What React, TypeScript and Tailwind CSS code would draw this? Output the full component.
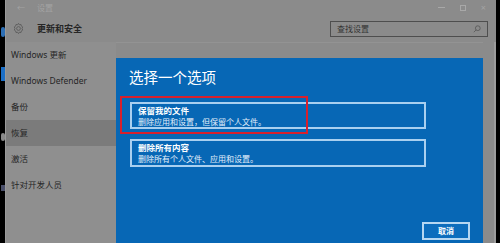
export default function App() {
  const menu = ["Windows 更新", "Windows Defender", "备份", "恢复", "激活", "针对开发人员"];
  const font = { fontFamily: '"Noto Sans", "Noto Sans CJK SC", sans-serif' };

  return (
    <div className="w-[500px] h-[243px] bg-black flex overflow-hidden" style={font}>
      {/* desktop strip on the left */}
      <div className="w-[5px] h-full flex flex-col items-center pt-[27px] gap-[30px]">
        <div className="w-[4px] h-[10px] bg-[#2d6fb5] rounded-sm" />
        <div className="w-[4px] h-[14px] bg-[#1c6fc7]" />
        <div className="w-[4px] h-[8px] bg-[#8a8a8a] rounded-full mt-[22px]" />
        <div className="w-[4px] h-[6px] bg-[#4a4f6a] mt-[14px]" />
      </div>

      {/* settings window, dimmed */}
      <div className="w-[491px] h-full bg-[#8b8b8b] border-l border-[#9a9a9a] flex flex-col">
        {/* title bar */}
        <div className="h-[15px] flex items-center text-[#a3a3a3] text-[8px]">
          <span className="ml-[11px] w-[20px]">←</span>
          <span>设置</span>
          <div className="ml-auto flex items-center gap-[15px] mr-[10px]">
            <span className="w-[7px] h-px bg-[#a8a8a8]" />
            <span className="w-[6px] h-[6px] border border-[#a8a8a8]" />
            <span className="text-[9px] leading-none">×</span>
          </div>
        </div>

        {/* header */}
        <div className="h-[27px] flex items-center">
          <svg className="ml-[6px]" width="13" height="13" viewBox="0 0 24 24" fill="none" stroke="#5a5a5a" strokeWidth="1.6">
            <circle cx="12" cy="12" r="3.5" />
            <path d="M12 2.5l1.6 2.6 3-.6.6 3 2.6 1.6-1.3 2.9 1.3 2.9-2.6 1.6-.6 3-3-.6L12 21.5l-1.6-2.6-3 .6-.6-3-2.6-1.6L5.5 12 4.2 9.1l2.6-1.6.6-3 3 .6z" />
          </svg>
          <span className="ml-[12px] text-[9px] font-bold text-[#262626]">更新和安全</span>
          <div className="ml-auto mr-[8px] w-[158px] h-[16px] border border-[#4e4e4e] flex items-center px-[6px] text-[8px] text-[#333]">
            <span>查找设置</span>
            <svg className="ml-auto" width="8" height="8" viewBox="0 0 10 10" fill="none" stroke="#555" strokeWidth="1">
              <circle cx="6" cy="4" r="3" />
              <path d="M3.8 6.2L1 9" />
            </svg>
          </div>
        </div>

        <div className="flex flex-1 min-h-0">
          {/* sidebar */}
          <div className="w-[111px] bg-[#8f8f8f] flex flex-col">
            {menu.map((item) => (
              <div
                key={item}
                className={`h-[26px] flex items-center pl-[5px] text-[8.5px] text-[#262626] ${
                  item === "恢复" ? "bg-[#7b7b7b]" : ""
                }`}
              >
                {item}
              </div>
            ))}
          </div>

          {/* main area with dialog */}
          <div className="flex-1 pt-[15px] border-t border-[#939393]">
            <div className="w-[367px] h-[200px] bg-[#0767b5] pl-[14px] pr-[57px] pt-[9px] relative">
              <div className="text-white text-[14.5px] leading-[20px] -ml-[1px]">选择一个选项</div>

              <div className="mt-[15px] h-[27px] border-2 border-[#a9d0f0] px-[6px] flex flex-col justify-center text-white">
                <div className="text-[8.5px] font-bold leading-[11px]">保留我的文件</div>
                <div className="text-[8px] leading-[11px] text-[#e4f0fb]">删除应用和设置，但保留个人文件。</div>
              </div>

              <div className="mt-[10px] h-[28px] border-2 border-[#a9d0f0] px-[6px] flex flex-col justify-center text-white">
                <div className="text-[8.5px] font-bold leading-[11px]">删除所有内容</div>
                <div className="text-[8px] leading-[11px] text-[#e4f0fb]">删除所有个人文件、应用和设置。</div>
              </div>

              <div className="flex justify-end mt-[55px] -mr-[44px]">
                <div className="w-[48px] h-[18px] border-2 border-[#b6d7f2] bg-[#0c6dbd] flex items-center justify-center text-white text-[8px] font-bold">
                  取消
                </div>
              </div>

              {/* red highlight annotation */}
              <div className="absolute left-[4px] top-[38px] w-[188px] h-[38px] border-2 border-[#d8202c]" />
            </div>
          </div>

          <div className="w-[13px] flex justify-end">
            <div className="w-[2px] h-full bg-[#9c9c9c]" />
          </div>
        </div>
      </div>

      <div className="flex-1" />
    </div>
  );
}
